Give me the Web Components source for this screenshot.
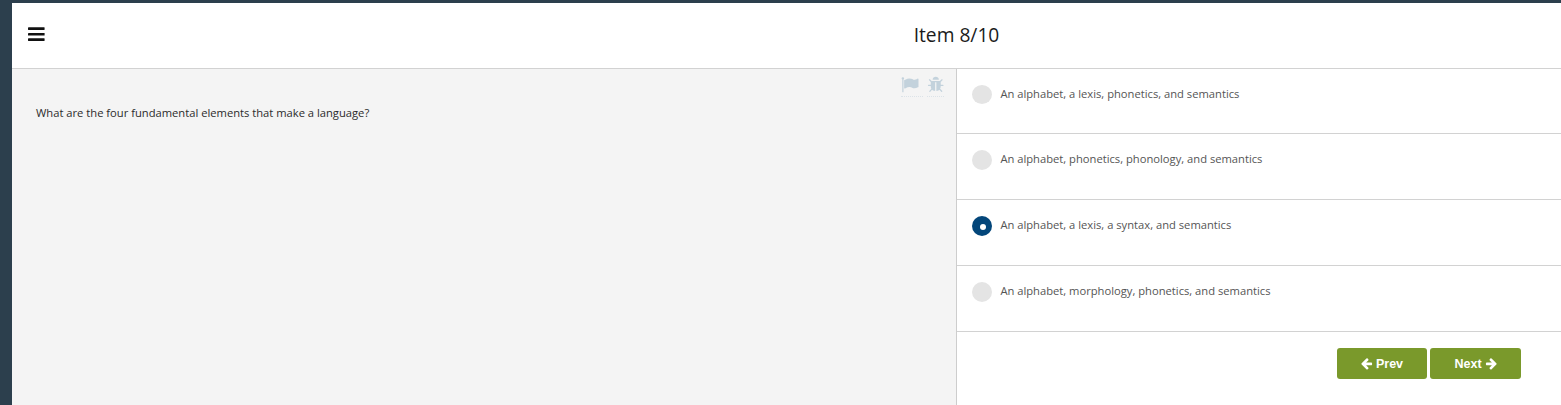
<!DOCTYPE html>
<html lang="en">
<head>
<meta charset="utf-8">
<title>Item 8/10</title>
<style>
html, body { margin: 0; height: 100%; overflow: hidden; }
body { font-family: "Open Sans", "Noto Sans", sans-serif; font-size: 11.2px; color: #222; }
</style>
</head>
<body>
<quiz-app></quiz-app>
<script>
function define(name, html) {
  const template = document.createElement('template');
  template.innerHTML = html;
  customElements.define(name, class extends HTMLElement {
    constructor() {
      super();
      this.attachShadow({ mode: 'open' }).appendChild(template.content.cloneNode(true));
    }
  });
}

const ICONS = {
  left: 'M1664 896v128q0 53-32.5 90.5t-84.5 37.5h-704l293 294q38 36 38 90t-38 90l-75 76q-37 37-90 37-52 0-91-37l-651-652q-37-37-37-90 0-52 37-91l651-650q38-38 91-38 52 0 90 38l75 74q38 38 38 91t-38 91l-293 293h704q52 0 84.5 37.5t32.5 90.5z',
  right: 'M1600 960q0 54-37 91l-651 651q-39 37-91 37-51 0-90-37l-75-75q-38-38-38-91t38-91l293-293h-704q-52 0-84.5-37.5t-32.5-90.5v-128q0-53 32.5-90.5t84.5-37.5h704l-293-294q-38-36-38-90t38-90l75-75q38-38 90-38 53 0 91 38l651 651q37 35 37 90z',
  flag: 'M320 256q0 72-64 110v1266q0 13-9.5 22.5t-22.5 9.5h-64q-13 0-22.5-9.5t-9.5-22.5v-1266q-64-38-64-110 0-53 37.5-90.5t90.5-37.5 90.5 37.5 37.5 90.5zm1472 64v763q0 25-12.5 38.5t-39.5 27.5q-215 116-369 116-61 0-123.5-22t-108.5-48-115.5-48-142.5-22q-192 0-464 146-17 9-33 9-26 0-45-19t-19-45v-742q0-32 31-55 21-14 79-43 236-120 421-120 107 0 200 29t219 88q38 19 88 19 54 0 117.5-21t110-47 88-47 54.5-21q26 0 45 19t19 45z',
  bug: 'M1696 960q0 26-19 45t-45 19h-224q0 171-67 290l208 209q19 19 19 45t-19 45q-18 19-45 19t-45-19l-198-197q-5 5-15 13t-42 28.5-65 36.5-82 29-97 13v-896h-128v896q-51 0-101.5-13.5t-87-33-66-39-43.5-32.5l-15-14-183 207q-20 21-48 21-24 0-43-16-19-18-20.5-44.5t15.5-46.5l202-227q-58-114-58-274h-224q-26 0-45-19t-19-45 19-45 45-19h224v-294l-173-173q-19-19-19-45t19-45 45-19 45 19l173 173h844l173-173q19-19 45-19t45 19 19 45-19 45l-173 173v294h224q26 0 45 19t19 45zm-480-576h-640q0-133 93.5-226.5t226.5-93.5 226.5 93.5 93.5 226.5z'
};

customElements.define('glyph-icon', class extends HTMLElement {
  connectedCallback() {
    if (this.shadowRoot) return;
    this.attachShadow({ mode: 'open' }).innerHTML =
      `<style>:host{display:block;width:var(--size,13px);height:var(--size,13px)}svg{display:block;width:100%;height:100%;fill:currentColor}</style>
       <svg viewBox="0 0 1792 1792" aria-hidden="true"><path d="${ICONS[this.getAttribute('name')]}"/></svg>`;
  }
});

define('menu-button', `
  <style>
    :host { display: block; width: 17px; height: 15px; color: #111; }
    svg { display: block; fill: currentColor; }
  </style>
  <svg width="17" height="15" viewBox="0 0 17 15" aria-hidden="true">
    <rect y=".3" width="16.6" height="2.6" rx=".4"/>
    <rect y="6" width="16.6" height="2.6" rx=".4"/>
    <rect y="11.3" width="16.6" height="2.6" rx=".4"/>
  </svg>`);

define('quiz-header', `
  <style>
    :host { display: grid; grid-template-columns: 340px 1fr; align-items: center; box-sizing: border-box;
      height: 66px; padding-left: 16px; background: #fff; border-bottom: 1px solid #d2d2d2; }
    menu-button { align-self: start; margin-top: 24px; }
    h1 { margin: 0; font-weight: 400; font-size: 19.2px; line-height: 26px; color: #1b1b1b; text-align: center;
      padding: 0 16px 2px 0; }
  </style>
  <menu-button></menu-button>
  <h1><slot></slot></h1>`);

define('tool-link', `
  <style>
    :host { display: block; box-sizing: border-box; height: 21px; color: #c3d2dc; --size: 17.5px;
      border-bottom: 1px dotted #dce3e8; }
  </style>
  <slot></slot>`);

define('question-panel', `
  <style>
    :host { display: block; background: #f4f4f4; border-right: 1px solid #cdcdcd; }
    nav { display: flex; justify-content: flex-end; gap: 4px; padding: 7px 12px 0 0; }
    .flag { width: 22px; } .bug { width: 17px; }
    .bug glyph-icon { margin-left: -.4px; }
    p { margin: 8px 24px; line-height: 16px; color: #2b2b2b; }
  </style>
  <nav>
    <tool-link class="flag"><glyph-icon name="flag"></glyph-icon></tool-link>
    <tool-link class="bug"><glyph-icon name="bug"></glyph-icon></tool-link>
  </nav>
  <p><slot></slot></p>`);

define('answer-option', `
  <style>
    :host { display: flex; align-items: flex-start; gap: 8.4px; box-sizing: border-box; height: 66px;
      padding: 16px 15px 0; border-bottom: 1px solid #d2d2d2; color: #555; }
    :host([first]) { height: 65px; --dot-height: 19px; }
    i { display: flex; align-items: center; justify-content: center; width: 20px; height: var(--dot-height, 20px);
      border-radius: 50%; background: #e4e4e4; }
    :host([checked]) i { background: #03467a; }
    :host([checked]) i::after { content: ""; width: 6px; height: 6px; border-radius: 50%; background: #fff;
      margin: 2px 0 0 2px; }
    span { line-height: 18px; }
  </style>
  <i></i><span><slot></slot></span>`);

define('nav-button', `
  <style>
    :host { display: block; width: var(--width, 90px); }
    button { display: flex; align-items: center; justify-content: center; gap: 3px; width: 100%; height: 31px;
      padding: var(--pad, 0 1px 0 0); border: 0; border-radius: 3px; background: #7a992b; color: #fff;
      font: bold 12.5px/16px "Liberation Sans", Arial, sans-serif; }
  </style>
  <button type="button"><slot></slot></button>`);

define('answer-panel', `
  <style>
    :host { display: block; background: #fff; }
    footer { display: flex; justify-content: flex-end; gap: 3px; padding: 16px 40px 0 0; }
    .next { --width: 91px; --pad: 0 0 0 1.2px; }
  </style>
  <slot></slot>
  <footer>
    <nav-button><glyph-icon name="left"></glyph-icon><span>Prev</span></nav-button>
    <nav-button class="next"><span>Next</span><glyph-icon name="right"></glyph-icon></nav-button>
  </footer>`);

define('quiz-app', `
  <style>
    :host { display: flex; flex-direction: column; box-sizing: border-box; height: 100vh;
      padding: 3px 0 0 12px; background: #2c3f4d; }
    main { flex: 1; display: grid; grid-template-columns: 945px 1fr; min-height: 0; }
  </style>
  <quiz-header>Item 8/10</quiz-header>
  <main>
    <question-panel>What are the four fundamental elements that make a language?</question-panel>
    <answer-panel>
      <answer-option first>An alphabet, a lexis, phonetics, and semantics</answer-option>
      <answer-option>An alphabet, phonetics, phonology, and semantics</answer-option>
      <answer-option checked>An alphabet, a lexis, a syntax, and semantics</answer-option>
      <answer-option>An alphabet, morphology, phonetics, and semantics</answer-option>
    </answer-panel>
  </main>`);
</script>
</body>
</html>
